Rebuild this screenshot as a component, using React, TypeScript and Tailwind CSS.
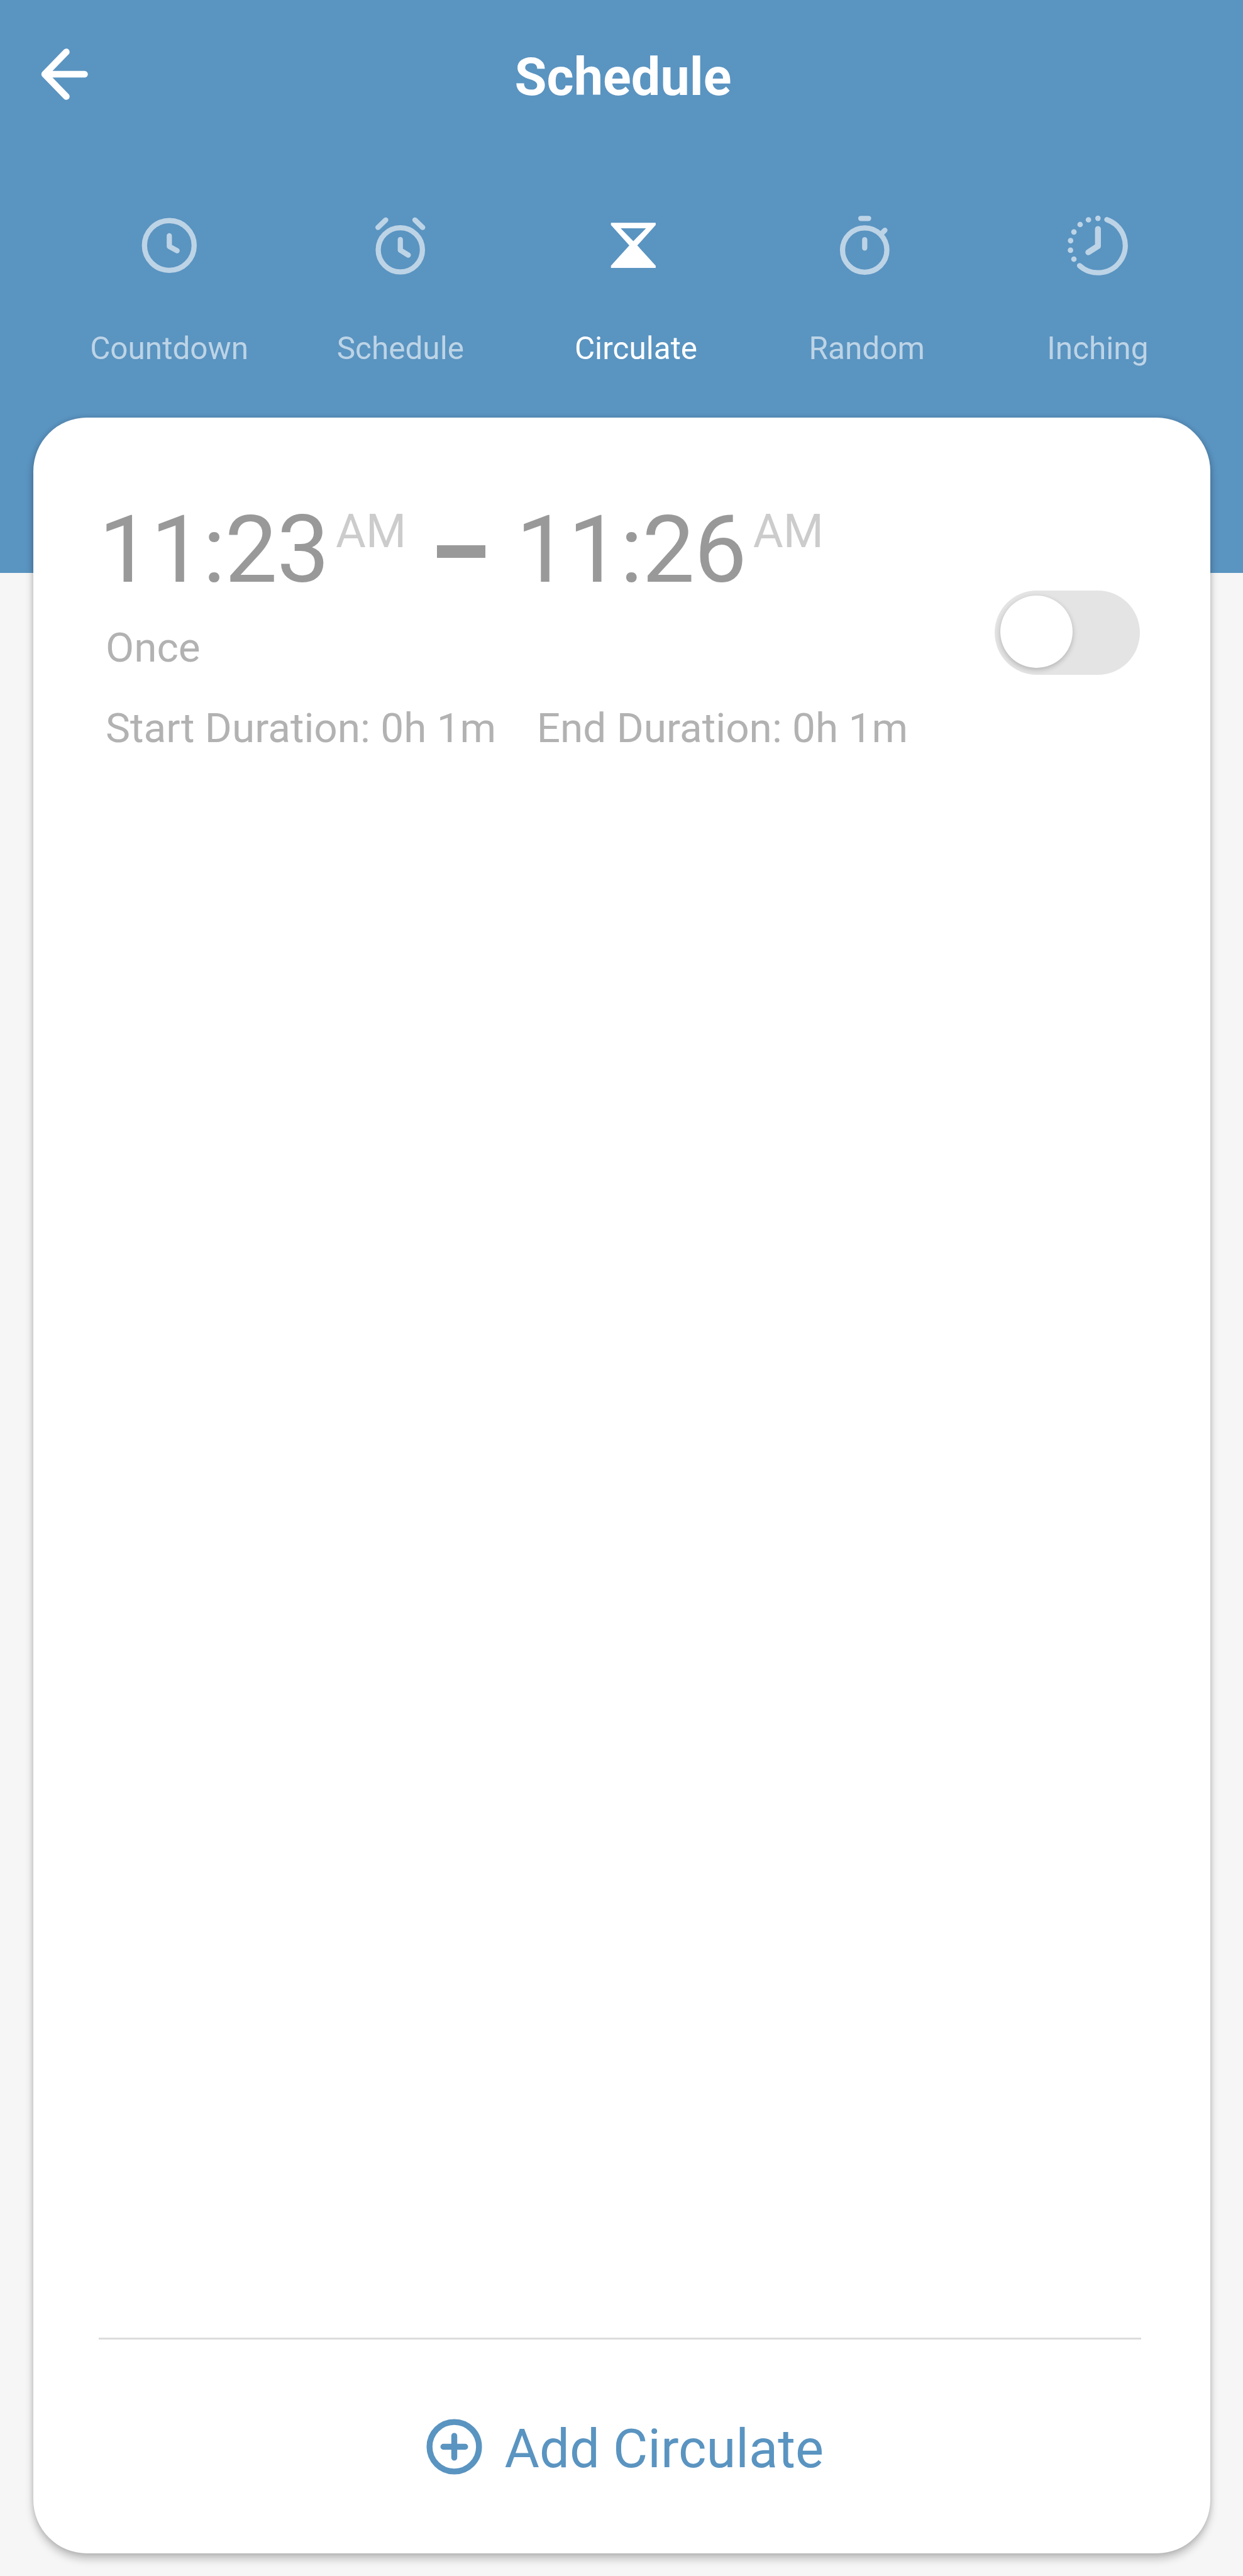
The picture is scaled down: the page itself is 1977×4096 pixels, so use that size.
import { useState, type ReactNode } from 'react';
import clsx from 'clsx';

interface Tab {
  id: string;
  label: string;
  viewBox: string;
  labelClass?: string;
  icon: ReactNode;
}

interface CirculateItem {
  id: string;
  start: string;
  end: string;
  repeat: string;
  startDuration: string;
  endDuration: string;
  enabled: boolean;
}

const INCHING_DOTS = [
  [0, -43.7],
  [-15.3, -41.3],
  [-28.7, -33.7],
  [-38.7, -21.7],
  [-44, -7.7],
  [-44.2, 7.7],
  [-38.7, 22],
];

const TABS: Tab[] = [
  {
    id: 'countdown',
    label: 'Countdown',
    viewBox: '-60 -60 120 120',
    icon: (
      <>
        <circle r="40" />
        <path d="M0 -15.5V1.5L12.5 8.5" />
      </>
    ),
  },
  {
    id: 'schedule',
    label: 'Schedule',
    viewBox: '-58.4 -60 120 120',
    labelClass: 'mr-[3px]',
    icon: (
      <>
        <circle cy="7" r="35.6" />
        <path d="M0 -9.5V7.5L12.8 15.5" />
        <path d="M-36 -29L-23.5 -41M36 -29L23.5 -41" />
      </>
    ),
  },
  {
    id: 'circulate',
    label: 'Circulate',
    viewBox: '-60 -60 120 120',
    labelClass: 'ml-[8px]',
    icon: (
      <path
        d="M-36 -36.5H36V-33L6.4 0L36 32.5V36H-36V32.5L-6.4 0L-36 -33ZM-20.4 -27.5H20.4L0 -7Z"
        fill="currentColor"
        fillRule="evenodd"
        stroke="none"
      />
    ),
  },
  {
    id: 'random',
    label: 'Random',
    viewBox: '-59 -60 120 120',
    labelClass: 'ml-[4px]',
    icon: (
      <>
        <circle cy="7.4" r="35.7" />
        <path d="M0 -9.3V4" />
        <path d="M-6.3 -43.5H6.3M27 -19L32.5 -24.5" />
      </>
    ),
  },
  {
    id: 'inching',
    label: 'Inching',
    viewBox: '-60 -60 120 120',
    icon: (
      <>
        <path d="M14.3 -41.5A43.9 43.9 0 1 1 -29.6 32.4" />
        <path d="M0 -26.5V1L-15.5 11" strokeWidth="9.5" />
        {INCHING_DOTS.map(([x, y]) => (
          <circle key={`${x}:${y}`} cx={x} cy={y} r="4.4" fill="currentColor" stroke="none" />
        ))}
      </>
    ),
  },
];

const ITEMS: CirculateItem[] = [
  {
    id: '1',
    start: '11:23',
    end: '11:26',
    repeat: 'Once',
    startDuration: '0h 1m',
    endDuration: '0h 1m',
    enabled: false,
  },
];

function Time({ value }: { value: string }) {
  return (
    <div className="flex items-start">
      <span className="text-[149px] leading-[150px] tracking-[-1px] text-[#999999]">{value}</span>
      <span className="ml-[11px] mt-[9px] text-[73.5px] leading-[74px] text-[#cccccc]">AM</span>
    </div>
  );
}

function Toggle({ on, onChange }: { on: boolean; onChange: () => void }) {
  return (
    <button
      type="button"
      role="switch"
      aria-checked={on}
      onClick={onChange}
      className={clsx(
        'flex h-[134px] w-[231px] items-start rounded-full px-[9px] pt-[7.5px]',
        on ? 'justify-end bg-[#5a94c1]' : 'justify-start bg-[#e4e4e4]',
      )}
    >
      <span className="size-[115.5px] rounded-full bg-white shadow-[0_3px_8px_rgba(0,0,0,0.22)]" />
    </button>
  );
}

export default function App() {
  const [activeTab, setActiveTab] = useState('circulate');
  const [items, setItems] = useState(ITEMS);

  const toggleItem = (id: string) => {
    setItems((prev) => prev.map((i) => (i.id === id ? { ...i, enabled: !i.enabled } : i)));
  };

  return (
    <div className="h-[4096px] w-full overflow-hidden bg-[#f6f6f6] font-[Roboto,sans-serif]">
      {/* Header */}
      <header className="h-[911px] bg-[#5a94c1]">
        <div className="grid h-[244px] grid-cols-[180px_1fr_175px] items-center">
          <button type="button" aria-label="Back" className="mb-[9px] ml-[52px] text-white">
            <svg
              viewBox="0 0 100 100"
              className="size-[100px]"
              fill="none"
              stroke="currentColor"
              strokeWidth="10.5"
              strokeLinecap="round"
              strokeLinejoin="round"
            >
              <path d="M53.5 14.5L19 50L53.5 85.5M19 50H82.5" />
            </svg>
          </button>
          <h1 className="mt-[2px] text-center text-[82.8px] font-bold leading-[100px] text-white">
            Schedule
          </h1>
        </div>

        <nav className="flex pl-[84.5px] pr-[46.5px] pt-[86.5px]">
          {TABS.map((t) => (
            <button
              key={t.id}
              type="button"
              onClick={() => setActiveTab(t.id)}
              className={clsx(
                'flex flex-1 flex-col items-center',
                activeTab === t.id ? 'text-white' : 'text-[#bdd4e6]',
              )}
            >
              <svg
                viewBox={t.viewBox}
                className="size-[118.6px]"
                fill="none"
                stroke="currentColor"
                strokeWidth="8.4"
                strokeLinecap="round"
                strokeLinejoin="round"
              >
                {t.icon}
              </svg>
              <span className={clsx('mt-[75px] text-[49.5px] leading-[60px]', t.labelClass)}>
                {t.label}
              </span>
            </button>
          ))}
        </nav>
      </header>

      {/* Card */}
      <main className="-mt-[247px] ml-[52.5px] flex h-[3396px] w-[1872px] flex-col rounded-[85px] bg-white shadow-[0_9px_14px_rgba(0,0,0,0.22),0_0_8px_rgba(0,0,0,0.14)]">
        <div className="flex-1 pl-[115.5px] pr-[112px] pt-[135px]">
          {items.map((item) => (
            <div key={item.id} className="flex items-start justify-between">
              <div>
                <div className="-ml-[11px] flex items-start">
                  <Time value={item.start} />
                  <div className="ml-[48.5px] mr-[49px] mt-[68px] h-[20px] w-[77px] bg-[#999999]" />
                  <Time value={item.end} />
                </div>
                <div className="mt-[43px] text-[65.7px] leading-[75px] text-[#b2b2b2]">
                  {item.repeat}
                </div>
                <div className="mt-[53px] flex gap-[64.5px] text-[65.7px] leading-[75px] text-[#b2b2b2]">
                  <span>Start Duration: {item.startDuration}</span>
                  <span>End Duration: {item.endDuration}</span>
                </div>
              </div>
              <div className="mt-[140px]">
                <Toggle on={item.enabled} onChange={() => toggleItem(item.id)} />
              </div>
            </div>
          ))}
        </div>

        {/* Footer action */}
        <div className="ml-[104px] mr-[110px] h-[3px] bg-[#dcdcdc]" />
        <button
          type="button"
          className="flex h-[340px] items-center pl-[625px] text-[#5a94c1]"
        >
          <svg
            viewBox="0 0 90 90"
            className="size-[89px]"
            fill="none"
            stroke="currentColor"
            strokeWidth="9.5"
            strokeLinecap="round"
          >
            <circle cx="45" cy="45" r="39.8" />
            <path d="M45 27.5V62.5M27.5 45H62.5" />
          </svg>
          <span className="ml-[36px] mt-[8px] text-[85px] leading-[100px]">Add Circulate</span>
        </button>
      </main>
    </div>
  );
}
